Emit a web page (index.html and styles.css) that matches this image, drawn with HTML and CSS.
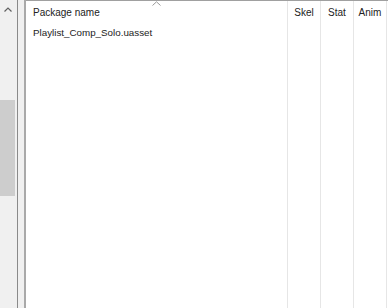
FILE: index.html
```html
<!DOCTYPE html>
<html>
<head>
<meta charset="utf-8">
<link rel="stylesheet" href="styles.css">
</head>
<body>
<div class="frame">
  <div class="scrollbar">
    <div class="arrow">
      <svg width="8" height="5" viewBox="0 0 8 5"><path d="M0.5 4.5 L4 1 L7.5 4.5" fill="none" stroke="#606060" stroke-width="1.2"/></svg>
    </div>
    <div class="track"><div class="thumb"></div></div>
  </div>
  <div class="split"></div>
  <div class="list">
    <div class="col col-name">
      <div class="head">Package name
        <svg class="sort" width="9" height="5" viewBox="0 0 9 5"><path d="M0.5 4.5 L4.5 0.8 L8.5 4.5" fill="none" stroke="#9a9a9a" stroke-width="1"/></svg>
      </div>
      <div class="cell">Playlist_Comp_Solo.uasset</div>
    </div>
    <div class="col col-small">
      <div class="head center">Skel</div>
    </div>
    <div class="col col-small">
      <div class="head center">Stat</div>
    </div>
    <div class="col col-small">
      <div class="head center">Anim</div>
    </div>
    <div class="col col-rest"></div>
  </div>
</div>
</body>
</html>
```
FILE: styles.css
```css
html, body {
  margin: 0;
  padding: 0;
  background: #ffffff;
}
body {
  font-family: "Liberation Sans", Arial, sans-serif;
  font-size: 10px;
  color: #222222;
}
.frame {
  display: flex;
  width: 388px;
  height: 308px;
  overflow: hidden;
}
.scrollbar {
  width: 17px;
  background: #f0f0f0;
  border-right: 1px solid #8a8a8a;
  display: flex;
  flex-direction: column;
}
.arrow {
  height: 22px;
  display: flex;
  justify-content: center;
  align-items: center;
  padding-right: 1px;
  padding-bottom: 4px;
  box-sizing: border-box;
}
.track {
  flex: 1;
  padding-top: 78px;
}
.thumb {
  width: 15px;
  height: 96px;
  background: #cdcdcd;
}
.split {
  width: 6px;
  background: #f0f0f0;
  border-right: 2px solid #a9a9a9;
}
.list {
  flex: 1;
  display: flex;
  border-top: 1px solid #a0a0a0;
}
.col {
  display: flex;
  flex-direction: column;
}
.col-name {
  width: 261px;
  border-right: 1px solid #e6e6e6;
}
.col-small {
  width: 32px;
  border-right: 1px solid #e6e6e6;
}
.col-rest {
  flex: 1;
}
.head {
  position: relative;
  line-height: 12px;
  padding: 6px 0 6px 7px;
  white-space: nowrap;
}
.head.center {
  padding-left: 0;
  text-align: center;
}
.sort {
  position: absolute;
  top: 0;
  left: 126px;
}
.cell {
  line-height: 12px;
  padding: 2px 0 0 7px;
  font-size: 9.8px;
  white-space: nowrap;
}
```
